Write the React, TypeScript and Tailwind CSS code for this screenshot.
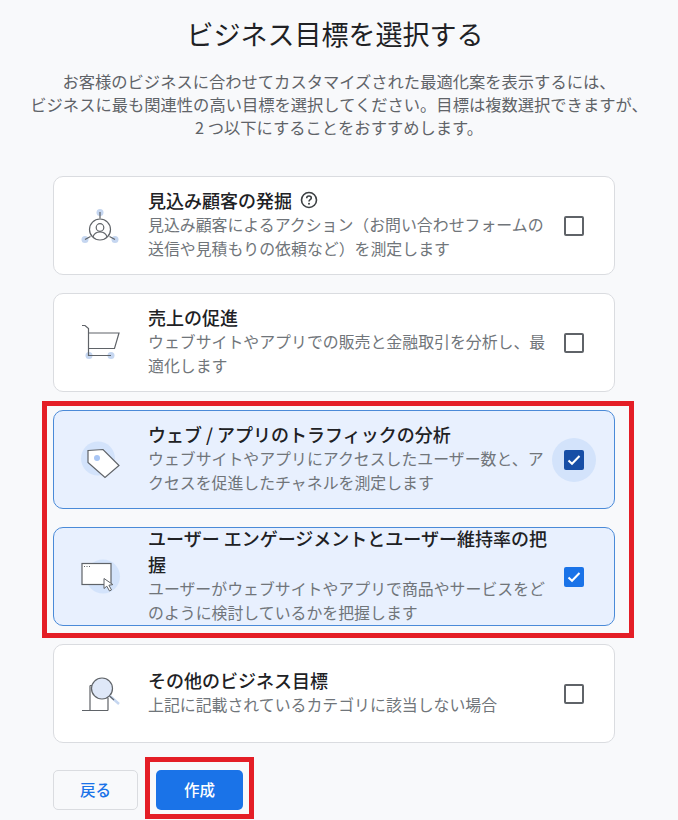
const font = { fontFamily: '"Noto Sans CJK JP", "Noto Sans", sans-serif' };

const LeadIcon = () => (
  <svg width="44" height="44" viewBox="0 0 44 44" fill="none">
    <circle cx="20" cy="8.500" r="3.500" fill="#c5d6f0" />
    <circle cx="5" cy="35.500" r="3.500" fill="#c5d6f0" />
    <circle cx="35" cy="35.500" r="3.500" fill="#c5d6f0" />
    <path d="M20 8v6.500M5 35.500l5.500-3M35 35.500l-5.500-3" stroke="#5f6368" strokeWidth="1.200" />
    <circle cx="20" cy="25.500" r="10.500" stroke="#5f6368" strokeWidth="1.200" />
    <circle cx="20" cy="23.500" r="3.800" stroke="#5f6368" strokeWidth="1.200" />
    <path d="M13 33c1-3.500 4-5 7-5s6 1.500 7 5" stroke="#5f6368" strokeWidth="1.200" />
  </svg>
);

const CartIcon = () => (
  <svg width="44" height="44" viewBox="0 0 44 44" fill="none">
    <circle cx="9" cy="34.500" r="3.500" fill="#c5d6f0" />
    <circle cx="31" cy="34.500" r="3.500" fill="#c5d6f0" />
    <path d="M2 4.500h3l3.500 3v27H31" stroke="#5f6368" strokeWidth="1.200" />
    <path d="M8.500 12H39l-4.500 15.500h-26" stroke="#5f6368" strokeWidth="1.200" />
  </svg>
);

const TagIcon = () => (
  <svg width="44" height="44" viewBox="0 0 44 44" fill="none">
    <circle cx="18" cy="20.500" r="17" fill="#d3e3fb" />
    <path d="M8 12.500l15-1 16 16-14 12-17-15z" fill="#fff" stroke="#5f6368" strokeWidth="1.200" />
    <circle cx="17" cy="20" r="3" fill="#a9c6f5" />
  </svg>
);

const WindowIcon = () => (
  <svg width="44" height="44" viewBox="0 0 44 44" fill="none">
    <circle cx="23" cy="21.500" r="17" fill="#d3e3fb" />
    <rect x="2" y="8.500" width="29" height="21" fill="#fff" stroke="#5f6368" strokeWidth="1.200" />
    <path d="M4 11.500h1M6.500 11.500h1M9 11.500h1" stroke="#5f6368" strokeWidth="1" />
    <path d="M24 23.500v10l2.800-2.300 2.700 4.800 2-1.100-2.600-4.700 4-.6z" fill="#fff" stroke="#5f6368" strokeWidth="1" />
  </svg>
);

const SearchDocIcon = () => (
  <svg width="44" height="44" viewBox="0 0 44 44" fill="none">
    <path d="M10 13.500v25M2 38.500h26M28 38.500V26M10 13.500h3" stroke="#5f6368" strokeWidth="1.200" />
    <circle cx="22" cy="16.500" r="10.500" fill="#dfe8f8" stroke="#5f6368" strokeWidth="1.200" />
    <path d="M30 24l9 8" stroke="#c5d6f0" strokeWidth="2.500" />
    <path d="M29.500 24l4.500 4" stroke="#5f6368" strokeWidth="1.200" />
  </svg>
);

const Checkbox = ({ checked, focused }: { checked: boolean; focused?: boolean }) => (
  <div className="relative flex h-5 w-5 shrink-0 items-center justify-center">
    {focused && <div className="absolute left-1/2 top-1/2 h-11 w-11 -translate-x-1/2 -translate-y-1/2 rounded-full bg-[#d3e3fb]" />}
    {checked ? (
      <div className={`relative flex h-5 w-5 shrink-0 items-center justify-center rounded-[2px] ${focused ? "bg-[#174ea6]" : "bg-[#1a73e8]"}`}>
        <svg width="16" height="16" viewBox="0 0 16 16" fill="none">
          <path d="M2.500 8.500l3.500 3.300L13.500 4" stroke="#fff" strokeWidth="2" />
        </svg>
      </div>
    ) : (
      <div className="h-5 w-5 shrink-0 rounded-[2px] border-2 border-[#5f6368]" />
    )}
  </div>
);

type Goal = {
  title: string;
  desc: string;
  icon: React.ReactNode;
  selected?: boolean;
  focused?: boolean;
  help?: boolean;
};

const Card = ({ goal }: { goal: Goal }) => (
  <div
    className={`flex h-[99px] items-center rounded-[10px] border pl-[26px] pr-[30px] ${
      goal.selected ? "border-[#4a8ad8] bg-[#e8f0fe]" : "border-[#dadce0] bg-white"
    }`}
  >
    <div className="flex w-[68px] shrink-0">{goal.icon}</div>
    <div className="w-[406px] shrink-0 pb-[3px]">
      <div className="flex items-center gap-[8px] text-[18px] font-medium leading-[26px] text-[#202124]">
        <span>{goal.title}</span>
        {goal.help && (
          <svg width="18" height="18" viewBox="0 0 18 18" fill="none">
            <circle cx="9" cy="9" r="7.500" stroke="#3c4043" strokeWidth="1.600" />
            <path d="M6.700 7.200C6.700 5.900 7.700 5 9 5s2.300.9 2.300 2c0 1.700-2.300 1.700-2.300 3.500" stroke="#3c4043" strokeWidth="1.600" />
            <circle cx="9" cy="12.800" r="1" fill="#3c4043" />
          </svg>
        )}
      </div>
      <p className="text-[15.900px] leading-[24px] text-[#70757a]">{goal.desc}</p>
    </div>
    <div className="ml-auto">
      <Checkbox checked={!!goal.selected} focused={goal.focused} />
    </div>
  </div>
);

const goals: Goal[] = [
  {
    title: "見込み顧客の発掘",
    desc: "見込み顧客によるアクション（お問い合わせフォームの送信や見積もりの依頼など）を測定します",
    icon: <LeadIcon />,
    help: true,
  },
  {
    title: "売上の促進",
    desc: "ウェブサイトやアプリでの販売と金融取引を分析し、最適化します",
    icon: <CartIcon />,
  },
];

const selectedGoals: Goal[] = [
  {
    title: "ウェブ / アプリのトラフィックの分析",
    desc: "ウェブサイトやアプリにアクセスしたユーザー数と、アクセスを促進したチャネルを測定します",
    icon: <TagIcon />,
    selected: true,
    focused: true,
  },
  {
    title: "ユーザー エンゲージメントとユーザー維持率の把握",
    desc: "ユーザーがウェブサイトやアプリで商品やサービスをどのように検討しているかを把握します",
    icon: <WindowIcon />,
    selected: true,
  },
];

export default function App() {
  return (
    <div className="h-[820px] w-[678px] overflow-hidden bg-[#f8f9fb] px-[53px]" style={font}>
      <h1 className="-ml-[53px] -mr-[45px] pt-[14px] text-center text-[27px] leading-[40px] text-[#202124]">
        ビジネス目標を選択する
      </h1>
      <p className="-mx-[53px] mt-[16px] text-center text-[16.300px] leading-[23px] text-[#5f6368]">
        お客様のビジネスに合わせてカスタマイズされた最適化案を表示するには、
        <br />
        ビジネスに最も関連性の高い目標を選択してください。目標は複数選択できますが、
        <br />2 つ以下にすることをおすすめします。
      </p>
      <div className="mt-[37px] flex w-[562px] flex-col gap-[18px]">
        {goals.map((g) => (
          <Card key={g.title} goal={g} />
        ))}
        <div className="relative flex flex-col gap-[18px]">
          {selectedGoals.map((g) => (
            <Card key={g.title} goal={g} />
          ))}
          <div className="absolute -bottom-[12px] -left-[11px] -right-[19px] -top-[9px] border-[5px] border-[#e41e26]" />
        </div>
        <Card
          goal={{
            title: "その他のビジネス目標",
            desc: "上記に記載されているカテゴリに該当しない場合",
            icon: <SearchDocIcon />,
          }}
        />
      </div>
      <div className="mt-[27px] flex gap-[18px]">
        <button className="h-10 w-[85px] rounded-[5px] border border-[#dadce0] text-[15.500px] font-medium text-[#1a73e8]">
          戻る
        </button>
        <div className="relative">
          <button className="h-10 w-[87px] rounded-[5px] bg-[#1a73e8] text-[15.500px] font-medium text-white">
            作成
          </button>
          <div className="absolute -bottom-[9px] -left-[11px] -right-[11px] -top-[13px] border-[5px] border-[#e41e26]" />
        </div>
      </div>
    </div>
  );
}
